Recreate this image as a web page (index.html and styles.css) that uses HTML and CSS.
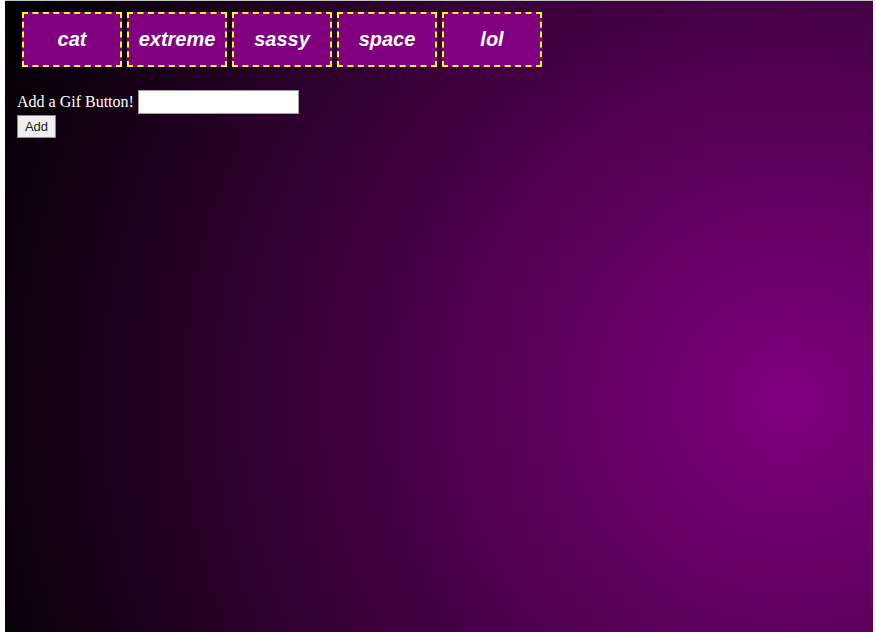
FILE: index.html
```html
<!DOCTYPE html>
<html>
<head>
<meta charset="utf-8">
<link rel="stylesheet" href="styles.css">
</head>
<body>
<div class="frame">
  <div class="gif-buttons">
    <button class="gif-btn">cat</button>
    <button class="gif-btn">extreme</button>
    <button class="gif-btn">sassy</button>
    <button class="gif-btn">space</button>
    <button class="gif-btn">lol</button>
  </div>
  <form class="add-form">
    <div class="add-row">
      <label class="add-label" for="gif-input">Add a Gif Button!</label>
      <input class="add-input" id="gif-input" type="text">
    </div>
    <button class="add-btn" type="button">Add</button>
  </form>
</div>
</body>
</html>
```
FILE: styles.css
```css
html, body {
  margin: 0;
  padding: 0;
  background: #ffffff;
}
.frame {
  margin: 0 3px 0 5px;
  height: 631px;
  border-top: 1px solid #c4c4c4;
  background: radial-gradient(circle at 785px 399px, #800080 0px, #000000 880px);
  overflow: hidden;
}
.gif-buttons {
  display: flex;
  gap: 5px;
  padding: 11px 0 0 17px;
}
.gif-btn {
  box-sizing: border-box;
  width: 100px;
  height: 55px;
  margin: 0;
  padding: 0;
  background: #800080;
  border: 2px dashed #ffff00;
  color: #ffffff;
  font-family: "Liberation Sans", Arial, sans-serif;
  font-weight: bold;
  font-style: italic;
  font-size: 20px;
  text-align: center;
}
.add-form {
  margin: 23px 0 0 12px;
  font-family: "Liberation Serif", "Times New Roman", serif;
  font-size: 16px;
  color: #ffffff;
}
.add-row {
  display: flex;
  align-items: center;
  gap: 4px;
  height: 24px;
}
.add-label {
  line-height: 18px;
}
.add-input {
  box-sizing: border-box;
  width: 161px;
  height: 24px;
  margin: 0;
  border: 1px solid #a0a0a0;
  background: #ffffff;
}
.add-btn {
  box-sizing: border-box;
  display: block;
  margin-top: 1px;
  width: 39px;
  height: 23px;
  padding: 0;
  background: #efefef;
  border: 1px solid #8a8a8a;
  color: #222222;
  font-family: "Liberation Sans", Arial, sans-serif;
  font-size: 13px;
}
```
